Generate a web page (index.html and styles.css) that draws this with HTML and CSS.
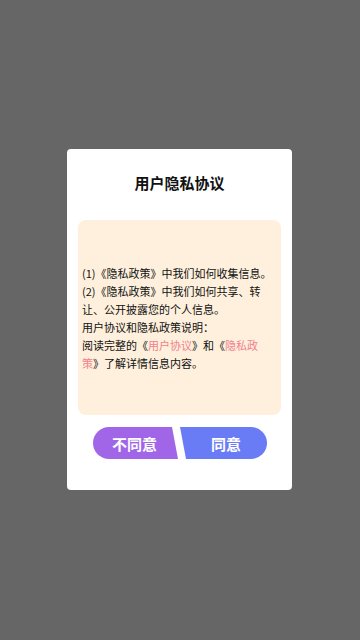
FILE: index.html
```html
<!DOCTYPE html>
<html lang="zh">
<head>
  <meta charset="UTF-8">
  <meta name="viewport" content="width=device-width, initial-scale=1.0">
  <title>用户隐私协议</title>
  <link rel="stylesheet" href="styles.css">
</head>
<body>
<div class="mask">
  <div class="dialog">
    <p class="title">用户隐私协议</p>

    <div class="content">
      <p class="text">
        (1)《隐私政策》中我们如何收集信息。<br>
        (2)《隐私政策》中我们如何共享、转<br>让、公开披露您的个人信息。<br>
        用户协议和隐私政策说明：<br>
        阅读完整的《<a class="link">用户协议</a>》和《<a class="link">隐私政<br>策</a>》了解详情信息内容。
      </p>
    </div>

    <div class="actions">
      <button type="button" class="btn btn-refuse">不同意</button>
      <button type="button" class="btn btn-agree">同意</button>
    </div>
  </div>
</div>
</body>
</html>
```

FILE: styles.css
```css
body {
  margin: 0;
  font-family: "Noto Sans CJK SC", "Noto Sans", sans-serif;
}

.mask {
  width: 360px;
  height: 640px;
  box-sizing: border-box;
  padding: 149px 0 0 67px;
  display: flex;
  align-items: flex-start;
  background-color: #666666;
}

.dialog {
  width: 225px;
  height: 341px;
  box-sizing: border-box;
  padding: 24px 11px 0 11px;
  background-color: #fff;
  border-radius: 4px;
  display: flex;
  flex-direction: column;
}

.title {
  margin: 0;
  height: 20px;
  line-height: 20px;
  font-size: 15px;
  font-weight: 700;
  text-align: center;
  color: #111;
}

.content {
  margin-top: 27px;
  height: 195px;
  box-sizing: border-box;
  padding: 0 4px;
  background-color: #fef0dc;
  border-radius: 8px;
  display: flex;
  align-items: center;
}

.text {
  margin: 0;
  font-size: 11px;
  line-height: 18px;
  color: #111;
  white-space: nowrap;
}

.link {
  color: #f2808e;
}

.actions {
  margin-top: 12px;
  padding: 0 14px 0 15px;
  display: flex;
}

.btn {
  width: 87px;
  height: 32px;
  border: none;
  outline: none;
  padding: 0;
  color: #fff;
  font-family: inherit;
  font-size: 15px;
  font-weight: 700;
}

.btn-refuse {
  background-color: #a166e7;
  border-radius: 16px 0 0 16px;
  clip-path: polygon(0 0, 79px 0, 85px 100%, 0 100%);
  padding-right: 4px;
}

.btn-agree {
  background-color: #6a7cf5;
  border-radius: 0 16px 16px 0;
  clip-path: polygon(0 0, 100% 0, 100% 100%, 6px 100%);
  padding-left: 5px;
}
```
